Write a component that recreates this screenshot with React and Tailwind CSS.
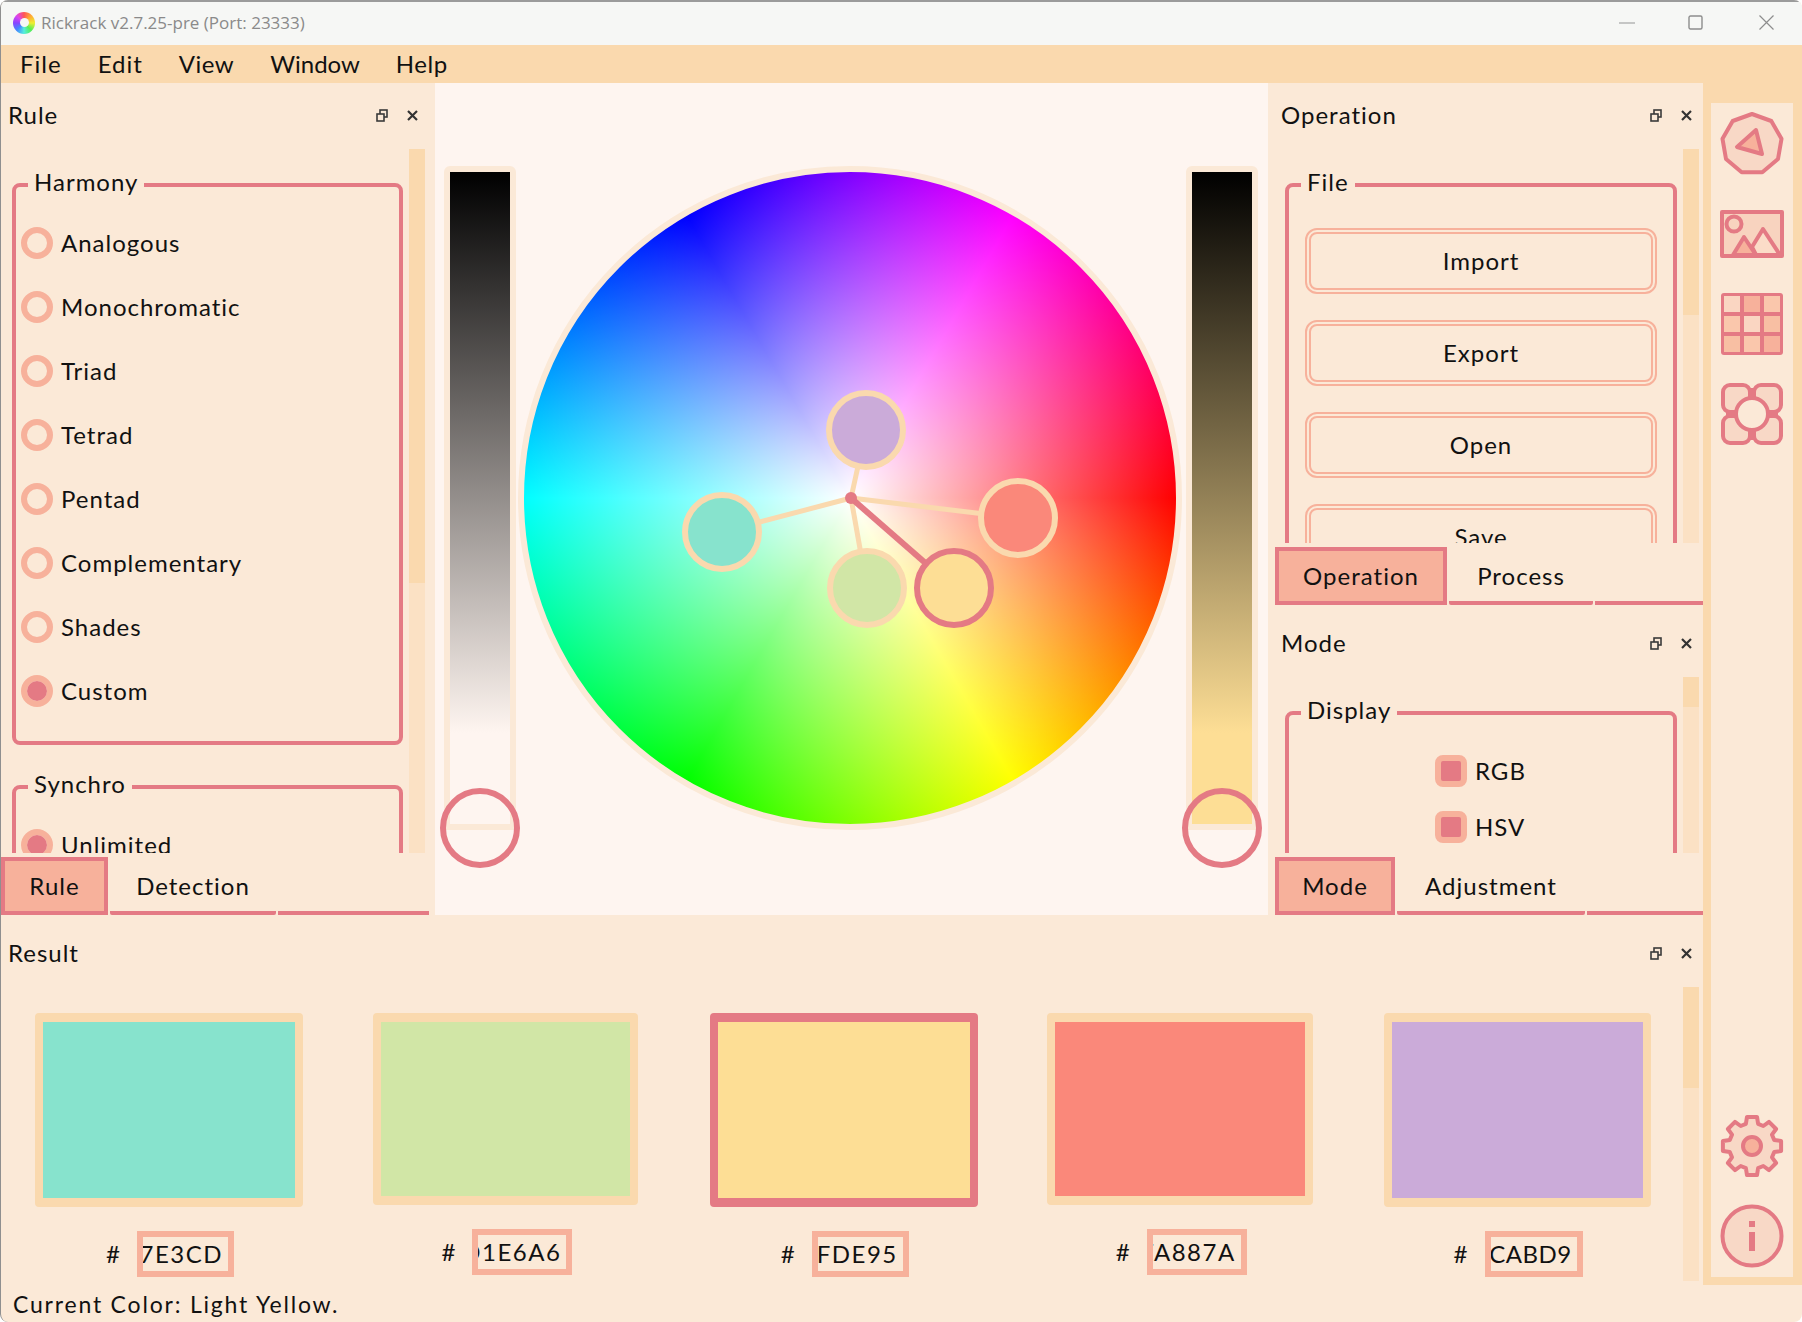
import React from "react";

const ROSE = "#e47a84";

function FloatClose() {
  return (
    <div className="flex items-center gap-[19px]">
      <svg width="12" height="13" viewBox="0 0 12 13" fill="none" stroke="#3a3a3a" strokeWidth="1.6">
        <rect x="4" y="1" width="7" height="7" />
        <rect x="1" y="5" width="7" height="7" fill="#fbe9d7" />
      </svg>
      <svg width="11" height="11" viewBox="0 0 11 11" stroke="#333" strokeWidth="2.2">
        <path d="M1 1 L10 10 M10 1 L1 10" />
      </svg>
    </div>
  );
}

function PanelHead({ title, className = "" }) {
  return (
    <div className={`flex items-center justify-between ${className}`}>
      <span className="text-[24px] leading-[30px]">{title}</span>
      <FloatClose />
    </div>
  );
}

function Scrollbar({ thumb }) {
  return (
    <div className="w-[16px] shrink-0 bg-[#fbe1c4]">
      <div className={`w-full bg-[#fad9ae] ${thumb}`} />
    </div>
  );
}

function Group({ title, children, className = "" }) {
  return (
    <fieldset className={`border-4 border-[#e47a84] rounded-[8px] ${className}`}>
      <legend className="ml-[12px] px-[6px] pb-[6px] text-[24px] leading-[28px]">{title}</legend>
      {children}
    </fieldset>
  );
}

function Radio({ label, on }) {
  return (
    <div className="h-[64px] flex items-center pl-[5px] gap-[8px] text-[24px]">
      <span className="w-[32px] h-[32px] rounded-full border-[6px] border-[#f7b19b] flex">
        {on && <span className="flex-1 rounded-full bg-[#e47a84]" />}
      </span>
      <span>{label}</span>
    </div>
  );
}

function Check({ label }) {
  return (
    <div className="h-[56px] flex items-center pl-[146px] gap-[8px] text-[24px]">
      <span className="w-[32px] h-[32px] rounded-[8px] border-[6px] border-[#f7b19b] bg-[#e47a84]" />
      <span>{label}</span>
    </div>
  );
}

function Tabs({ items, className = "" }) {
  return (
    <div className={`flex gap-[2px] h-[58px] mt-[4px] ${className}`}>
      {items.map((t) => (
        <div
          key={t.label}
          className={`flex items-center justify-center text-[24px] ${t.w} ${
            t.on ? "border-4 border-[#e47a84] bg-[#f7b19b]" : "border-b-4 border-[#e47a84] rounded-b-[2px] pt-[4px]"
          }`}
        >
          {t.label}
        </div>
      ))}
      <div className="flex-1 border-b-4 border-[#e47a84]" />
    </div>
  );
}

function Btn({ label }) {
  return (
    <div className="h-[66px] border-[6px] border-double border-[#f7b19b] rounded-[12px] flex items-center justify-center text-[24px] shrink-0">
      {label}
    </div>
  );
}

function Handle() {
  return (
    <div className="absolute left-1/2 -translate-x-1/2 -bottom-[44px] w-[80px] h-[80px] rounded-full border-[6px] border-[#e47a84]" />
  );
}

function Swatch({ bg, box, border, hex, boxW, top, track = "tracking-[1.5px]" }) {
  return (
    <div className={`flex flex-col ${top}`}>
      <div className="w-fit">
        <div className={`${box} rounded-[4px] border-x-[8px] border-y-[9px] ${border} ${bg}`} />
        <div className="mt-[24px] flex items-center justify-center pl-[2px] gap-[17px] text-[24px]">
          <span className="w-[14px]">#</span>
          <div className={`${boxW} h-[46px] border-[6px] border-[#f7b19b] overflow-hidden flex items-center justify-end pr-[5px] whitespace-nowrap ${track}`}>
            {hex}
          </div>
        </div>
      </div>
    </div>
  );
}

function Gear() {
  const teeth = 8;
  const pts = [];
  for (let i = 0; i < teeth; i++) {
    const a = (i * 2 * Math.PI) / teeth - Math.PI / 2;
    const s = 0.2;
    [
      [23, -0.27],
      [29.5, -s + 0.03],
      [29.5, s - 0.03],
      [23, 0.27],
    ].forEach(([r, d]) => {
      pts.push(`${(32 + r * Math.cos(a + d)).toFixed(1)},${(32 + r * Math.sin(a + d)).toFixed(1)}`);
    });
  }
  return (
    <svg width="64" height="64" viewBox="0 0 64 64" className="mx-auto">
      <polygon points={pts.join(" ")} fill="#f8d8c6" stroke={ROSE} strokeWidth="4" strokeLinejoin="round" />
      <circle cx="32" cy="32" r="9" fill="#f7b19b" stroke={ROSE} strokeWidth="4" />
    </svg>
  );
}

function SideBar() {
  return (
    <div className="w-[99px] pl-[8px] pr-[9px] pt-[20px] pb-[8px] flex">
      <div className="flex-1 bg-[#fbe9d7] flex flex-col items-center pt-[9px] pb-[9px]">
        <svg width="64" height="64" viewBox="0 0 64 64">
          <polygon points="32,2 51.3,9 61.5,26.8 58,47 42.3,60.2 21.7,60.2 6,47 2.5,26.8 12.7,9" fill="#f8d8c6" stroke={ROSE} strokeWidth="4" strokeLinejoin="round" />
          <polygon points="36,18 17,35 42,42" fill="#f7b19b" stroke={ROSE} strokeWidth="4" strokeLinejoin="round" />
        </svg>
        <svg width="64" height="48" viewBox="0 0 64 48" className="mt-[34px]">
          <rect x="2" y="2" width="60" height="44" fill="#f8d3bf" stroke={ROSE} strokeWidth="4" strokeLinejoin="round" />
          <circle cx="14" cy="14" r="7.5" fill="#f8d3bf" stroke={ROSE} strokeWidth="4" />
          <polygon points="43,19 32,37 36,45 60,45" fill="#fbdcc8" stroke={ROSE} strokeWidth="4" strokeLinejoin="round" />
          <polygon points="24,27 13,45 36,45" fill="#f7b19b" stroke={ROSE} strokeWidth="4" strokeLinejoin="round" />
        </svg>
        <svg width="64" height="64" viewBox="0 0 64 64" className="mt-[34px]">
          <rect x="1" y="1" width="62" height="62" rx="3" fill={ROSE} />
          <rect x="4" y="4" width="16" height="16" fill="#fad6c2" />
          <rect x="24" y="4" width="16" height="16" fill="#f7b19b" />
          <rect x="44" y="4" width="16" height="16" fill="#fac7ac" />
          <rect x="4" y="24" width="16" height="16" fill="#fac7ac" />
          <rect x="24" y="24" width="16" height="16" fill="#fad6c2" />
          <rect x="44" y="24" width="16" height="16" fill="#f8bfa3" />
          <rect x="4" y="44" width="16" height="16" fill="#f8bfa3" />
          <rect x="24" y="44" width="16" height="16" fill="#fac7ac" />
          <rect x="44" y="44" width="16" height="16" fill="#f7b19b" />
        </svg>
        <svg width="64" height="64" viewBox="0 0 64 64" className="mt-[26px]">
          <rect x="3" y="3" width="27" height="27" rx="7" fill="#f8d8c6" stroke={ROSE} strokeWidth="4" />
          <rect x="34" y="3" width="27" height="27" rx="7" fill="#f8d8c6" stroke={ROSE} strokeWidth="4" />
          <rect x="3" y="34" width="27" height="27" rx="7" fill="#f8d8c6" stroke={ROSE} strokeWidth="4" />
          <rect x="34" y="34" width="27" height="27" rx="7" fill="#f8d8c6" stroke={ROSE} strokeWidth="4" />
          <path d="M32 6 V58 M6 32 H58" stroke={ROSE} strokeWidth="5" />
          <circle cx="32" cy="32" r="16" fill="#fbe9d7" stroke={ROSE} strokeWidth="4" />
        </svg>
        <div className="mt-auto">
          <Gear />
        </div>
        <svg width="64" height="64" viewBox="0 0 64 64" className="mt-[26px]">
          <circle cx="32" cy="32" r="29.5" fill="#f8d8c6" stroke={ROSE} strokeWidth="4" />
          <rect x="29" y="17" width="6" height="6" fill={ROSE} />
          <rect x="29" y="28" width="6" height="19" fill={ROSE} />
        </svg>
      </div>
    </div>
  );
}

function Wheel() {
  const nodes = [
    { x: 204, y: 366, c: "#87e3cd" },
    { x: 348, y: 264, c: "#cbabd9" },
    { x: 500, y: 352, c: "#fa887a" },
    { x: 349, y: 422, c: "#d1e6a6" },
  ];
  return (
    <div className="relative w-[664px] h-[664px] rounded-full border-[6px] border-[#fbe9d7] shrink-0 bg-[conic-gradient(from_90deg,#ff0000,#ffff00,#00ff00,#00ffff,#0000ff,#ff00ff,#ff0000)]">
      <div className="absolute inset-0 rounded-full bg-[radial-gradient(closest-side,#ffffff,#ffffff00)]" />
      <svg width="664" height="664" viewBox="0 0 664 664" className="absolute -left-[6px] -top-[6px] overflow-visible">
        {nodes.map((n) => (
          <line key={n.c} x1="333" y1="332" x2={n.x} y2={n.y} stroke="#fad9ae" strokeWidth="5" />
        ))}
        {nodes.map((n) => (
          <circle key={n.c} cx={n.x} cy={n.y} r="37" fill={n.c} stroke="#fad9ae" strokeWidth="6" />
        ))}
        <line x1="333" y1="332" x2="436" y2="422" stroke={ROSE} strokeWidth="6" />
        <circle cx="436" cy="422" r="37" fill="#fdde95" stroke={ROSE} strokeWidth="6" />
        <circle cx="333" cy="332" r="6" fill={ROSE} />
      </svg>
    </div>
  );
}

export default function App() {
  return (
    <div className="w-[1802px] h-[1322px] flex flex-col overflow-hidden bg-[#fbe9d7] text-[#111] tracking-[1px] [font-family:Lato,sans-serif] border-l border-[#8f8f8f] rounded-t-[8px] rounded-b-[8px]">
      {/* title bar */}
      <div className="h-[45px] shrink-0 bg-[#f6f7f5] border-t-2 border-[#9b9b9b] flex items-center pl-[12px] pb-[2px] tracking-normal">
        <div className="w-[22px] h-[22px] rounded-full bg-[conic-gradient(#f55,#fa3,#ee3,#5e5,#5ed,#48f,#84f,#d4e,#f55)] flex items-center justify-center">
          <div className="w-[9px] h-[9px] rounded-full bg-[#f6f7f5]" />
        </div>
        <span className="ml-[6px] text-[17px] text-[#8a8a8a] [font-family:'Open_Sans',sans-serif]">Rickrack v2.7.25-pre (Port: 23333)</span>
        <div className="ml-auto flex items-center pr-[28px]">
          <svg width="16" height="16" viewBox="0 0 16 16" stroke="#a5a5a5" strokeWidth="1.2"><path d="M0 8 H16" /></svg>
          <svg width="15" height="15" viewBox="0 0 15 15" fill="none" stroke="#8d8d8d" strokeWidth="1.4" className="ml-[53px]"><rect x="1" y="1" width="13" height="13" rx="1.5" /></svg>
          <svg width="15" height="15" viewBox="0 0 15 15" stroke="#8d8d8d" strokeWidth="1.2" className="ml-[56px]"><path d="M0.5 0.5 L14.5 14.5 M14.5 0.5 L0.5 14.5" /></svg>
        </div>
      </div>

      {/* menu */}
      <div className="h-[38px] shrink-0 bg-[#fad9ae] flex items-center pl-[19px] gap-[36px] text-[24px]">
        <span>File</span>
        <span>Edit</span>
        <span className="tracking-[0.5px]">View</span>
        <span className="tracking-normal">Window</span>
        <span className="tracking-[0.5px]">Help</span>
      </div>

      {/* body */}
      <div className="h-[1202px] shrink-0 flex bg-[#fad9ae]">
        <div className="w-[1702px] shrink-0 flex flex-col">
          <div className="h-[832px] flex shrink-0">
            {/* Rule */}
            <div className="w-[434px] shrink-0 bg-[#fbe9d7] flex flex-col">
              <PanelHead title="Rule" className="h-[66px] pl-[7px] pr-[17px] pb-[2px]" />
              <div className="h-[704px] flex overflow-hidden pl-[11px] pr-[9px] gap-[6px]">
                <div className="w-[391px] shrink-0 pt-[19px]">
                  <Group title="Harmony" className="pt-[9px] pb-[18px]">
                    {["Analogous", "Monochromatic", "Triad", "Tetrad", "Pentad", "Complementary", "Shades"].map((n) => (
                      <Radio key={n} label={n} />
                    ))}
                    <Radio label="Custom" on />
                  </Group>
                  <Group title="Synchro" className="mt-[25px] pt-[9px] h-[120px]">
                    <Radio label="Unlimited" on />
                  </Group>
                </div>
                <Scrollbar thumb="h-[434px]" />
              </div>
              <Tabs
                className="pr-[6px]"
                items={[
                  { label: "Rule", w: "w-[107px]", on: true },
                  { label: "Detection", w: "w-[166px]" },
                ]}
              />
            </div>

            {/* center */}
            <div className="w-[833px] shrink-0 bg-[#fef5f0] flex items-start pl-[9px] pt-[83px]">
              <div className="relative w-[72px] h-[664px] shrink-0 border-[6px] border-[#fbe9d7] rounded-t-[6px]">
                <div className="h-full bg-[linear-gradient(#000000_0%,#fef5f0_86%)]" />
                <Handle />
              </div>
              <div className="ml-[2px]">
                <Wheel />
              </div>
              <div className="relative w-[72px] h-[664px] shrink-0 ml-[4px] border-[6px] border-[#fbe9d7] rounded-t-[6px]">
                <div className="h-full bg-[linear-gradient(#000000_0%,#fdde95_86%)]" />
                <Handle />
              </div>
            </div>

            {/* right */}
            <div className="w-[435px] shrink-0 bg-[#fbe9d7] flex flex-col">
              <div className="h-[522px] shrink-0 flex flex-col">
                <PanelHead title="Operation" className="h-[66px] pl-[13px] pr-[11px] pb-[2px]" />
                <div className="h-[394px] flex overflow-hidden pl-[17px] gap-[6px] pr-[4px]">
                  <div className="w-[392px] shrink-0 pt-[19px]">
                    <Group title="File" className="h-[500px]">
                      <div className="flex flex-col gap-[26px] px-[16px] pt-[26px]">
                        <Btn label="Import" />
                        <Btn label="Export" />
                        <Btn label="Open" />
                        <Btn label="Save" />
                      </div>
                    </Group>
                  </div>
                  <Scrollbar thumb="h-[166px]" />
                </div>
                <Tabs
                  className="pl-[7px]"
                  items={[
                    { label: "Operation", w: "w-[172px]", on: true },
                    { label: "Process", w: "w-[144px]" },
                  ]}
                />
              </div>
              <div className="h-[310px] shrink-0 flex flex-col">
                <PanelHead title="Mode" className="h-[72px] pl-[13px] pr-[11px] pt-[4px]" />
                <div className="h-[176px] flex overflow-hidden pl-[17px] gap-[6px] pr-[4px]">
                  <div className="w-[392px] shrink-0 pt-[19px]">
                    <Group title="Display" className="pt-[13px] h-[300px]">
                      <Check label="RGB" />
                      <Check label="HSV" />
                    </Group>
                  </div>
                  <Scrollbar thumb="h-[30px]" />
                </div>
                <Tabs
                  className="pl-[7px]"
                  items={[
                    { label: "Mode", w: "w-[120px]", on: true },
                    { label: "Adjustment", w: "w-[188px]" },
                  ]}
                />
              </div>
            </div>
          </div>

          {/* result */}
          <div className="flex-1 bg-[#fbe9d7] flex flex-col">
            <PanelHead title="Result" className="h-[72px] pl-[7px] pr-[11px] pt-[4px]" />
            <div className="flex-1 flex overflow-hidden pr-[4px]">
              <div className="w-[1682px] shrink-0 grid grid-cols-5 pt-[26px]">
                <Swatch top="pl-[34px]" box="w-[268px] h-[194px]" border="border-[#fad9ae]" bg="bg-[#87e3cd]" hex="87E3CD" boxW="w-[97px]" />
                <Swatch top="pl-[36px]" box="w-[265px] h-[192px]" border="border-[#fad9ae]" bg="bg-[#d1e6a6]" hex="D1E6A6" boxW="w-[100px]" />
                <Swatch top="pl-[36px]" box="w-[268px] h-[194px]" border="border-[#e47a84]" bg="bg-[#fdde95]" hex="FFDE95" boxW="w-[97px]" />
                <Swatch top="pl-[37px]" box="w-[266px] h-[192px]" border="border-[#fad9ae]" bg="bg-[#fa887a]" hex="FA887A" boxW="w-[100px]" />
                <Swatch top="pl-[37px]" box="w-[267px] h-[194px]" border="border-[#fad9ae]" bg="bg-[#cbabd9]" hex="CABD9" boxW="w-[98px]" track="tracking-[0.5px]" />
              </div>
              <div className="flex">
                <Scrollbar thumb="h-[101px]" />
              </div>
            </div>
            <div className="h-[4px] shrink-0" />
          </div>
        </div>
        <SideBar />
      </div>

      {/* status */}
      <div className="h-[37px] shrink-0 flex items-center pl-[12px] pt-[2px] text-[23px] tracking-[1.8px]">Current Color: Light Yellow.</div>
    </div>
  );
}
